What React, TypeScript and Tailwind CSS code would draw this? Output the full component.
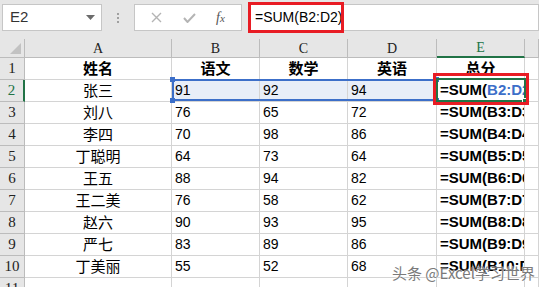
import React from "react";

const rows = [
  { name: "张三", b: 91, c: 92, d: 94 },
  { name: "刘八", b: 76, c: 65, d: 72 },
  { name: "李四", b: 70, c: 98, d: 86 },
  { name: "丁聪明", b: 64, c: 73, d: 64 },
  { name: "王五", b: 88, c: 94, d: 82 },
  { name: "王二美", b: 76, c: 58, d: 62 },
  { name: "赵六", b: 90, c: 93, d: 95 },
  { name: "严七", b: 83, c: 89, d: 86 },
  { name: "丁美丽", b: 55, c: 52, d: 68 },
];

const cjk = "font-['Noto_Sans_CJK_SC',sans-serif]";
const num = "font-['Liberation_Sans',Arial,sans-serif]";
const hdrFont = "font-['Liberation_Serif','Noto_Sans_CJK_SC',serif]";

function Toolbar() {
  return (
    <div className="relative h-[39px] bg-[#e6e6e6] flex items-start pt-[4px]">
      {/* name box */}
      <div className="ml-[2px] w-[100px] h-[27px] bg-white border border-[#c6c6c6] flex items-center justify-between pl-[7px] pr-[6px]">
        <span className={`${num} text-[15px] text-[#333]`}>E2</span>
        <svg width="9" height="5" viewBox="0 0 9 5">
          <path d="M0 0 H9 L4.5 5 Z" fill="#6b6b6b" />
        </svg>
      </div>
      {/* grip dots */}
      <div className="w-[32px] h-[27px] flex flex-col items-center justify-center gap-[2px]">
        <div className="w-[2px] h-[2px] bg-[#a0a0a0]" />
        <div className="w-[2px] h-[2px] bg-[#a0a0a0]" />
        <div className="w-[2px] h-[2px] bg-[#a0a0a0]" />
      </div>
      {/* cancel / enter / fx */}
      <div className="w-[108px] h-[27px] bg-white border border-[#c6c6c6] flex items-center justify-around px-[6px]">
        <svg width="11" height="11" viewBox="0 0 11 11">
          <path d="M1 1 L10 10 M10 1 L1 10" stroke="#b4b4b4" strokeWidth="1.4" />
        </svg>
        <svg width="13" height="10" viewBox="0 0 13 10">
          <path d="M1 5 L4.5 9 L12 1" stroke="#b4b4b4" strokeWidth="2" fill="none" />
        </svg>
        <span className="font-['Liberation_Serif',serif] italic text-[14px] text-[#555] leading-none">
          f<span className="text-[11px]">x</span>
        </span>
      </div>
      {/* formula input */}
      <div className="ml-[6px] flex-1 h-[27px] bg-white border border-[#c6c6c6] flex items-center pl-[6px]">
        <span className={`${num} text-[14px] text-black`}>=SUM(B2:D2)</span>
      </div>
      <div className="absolute left-[248px] top-[2px] w-[96px] h-[31px] border-[3px] border-[#e81c24]" />
    </div>
  );
}

export default function App() {
  const cell = "border-r border-b border-[#d4d4d4] h-[22px] overflow-hidden whitespace-nowrap flex items-center";
  const rh = `${hdrFont} border-r border-b border-[#bcbcbc] bg-[#e6e6e6] h-[22px] flex items-center justify-center text-[15px] text-[#222]`;
  const ch = `${hdrFont} border-r border-b border-[#bcbcbc] bg-[#e6e6e6] h-[19px] flex items-center justify-center text-[14px] text-[#222]`;

  return (
    <div className="w-[539px] h-[287px] overflow-hidden bg-white relative">
      <Toolbar />
      <div className="relative grid grid-cols-[25px_147px_88px_88px_89px_88px_14px]">
        {/* column headers */}
        <div className={`${ch} items-end justify-end pr-[3px] pb-[3px]`}>
          <svg width="11" height="11" viewBox="0 0 11 11">
            <path d="M11 0 V11 H0 Z" fill="#c2c2c2" />
          </svg>
        </div>
        <div className={ch}>A</div>
        <div className={ch}>B</div>
        <div className={ch}>C</div>
        <div className={ch}>D</div>
        <div className={`${ch} bg-[#d2d2d2] text-[#217346] border-b-2 border-b-[#217346]`}>E</div>
        <div className={ch} />

        {/* row 1 */}
        <div className={rh}>1</div>
        <div className={`${cell} ${cjk} justify-center font-bold text-[15px]`}>姓名</div>
        <div className={`${cell} ${cjk} justify-center font-bold text-[15px]`}>语文</div>
        <div className={`${cell} ${cjk} justify-center font-bold text-[15px]`}>数学</div>
        <div className={`${cell} ${cjk} justify-center font-bold text-[15px]`}>英语</div>
        <div className={`${cell} ${cjk} justify-center font-bold text-[15px]`}>总分</div>
        <div className={cell} />

        {rows.map((r, i) => {
          const n = i + 2;
          const active = n === 2;
          return (
            <React.Fragment key={n}>
              <div
                className={
                  active
                    ? `${rh} bg-[#d2d2d2] text-[#217346] border-r-2 border-r-[#217346]`
                    : rh
                }
              >
                {n}
              </div>
              <div className={`${cell} ${cjk} justify-center text-[15px] text-black`}>{r.name}</div>
              <div className={`${cell} ${num} pl-[3px] text-[14px] text-black ${active ? "bg-[#e8eef8]" : ""}`}>{r.b}</div>
              <div className={`${cell} ${num} pl-[3px] text-[14px] text-black ${active ? "bg-[#e8eef8]" : ""}`}>{r.c}</div>
              <div className={`${cell} ${num} pl-[3px] text-[14px] text-black ${active ? "bg-[#e8eef8]" : ""}`}>{r.d}</div>
              <div className={`${cell} ${num} pl-[3px] text-[15px] font-bold text-black`}>
                {active ? (
                  <span>
                    =SUM(<span className="text-[#3c6fc9]">B2:D2</span>)
                  </span>
                ) : (
                  `=SUM(B${n}:D${n})`
                )}
              </div>
              <div className={cell} />
            </React.Fragment>
          );
        })}

        {/* row 11 */}
        <div className={rh}>11</div>
        <div className={cell} />
        <div className={cell} />
        <div className={cell} />
        <div className={cell} />
        <div className={cell} />
        <div className={cell} />

        {/* referenced range B2:D2 */}
        <div className="absolute left-[172px] top-[40px] w-[265px] h-[22px] border-2 border-[#3c6fc9]" />
        <div className="absolute left-[170px] top-[38px] w-[5px] h-[5px] bg-[#3c6fc9]" />
        <div className="absolute left-[170px] top-[59px] w-[5px] h-[5px] bg-[#3c6fc9]" />
        <div className="absolute left-[434px] top-[38px] w-[5px] h-[5px] bg-[#3c6fc9]" />
        <div className="absolute left-[434px] top-[59px] w-[5px] h-[5px] bg-[#3c6fc9]" />

        {/* active cell E2 */}
        <div className="absolute left-[436px] top-[39px] w-[90px] h-[24px] border-2 border-[#217346]" />
        <div className="absolute left-[522px] top-[59px] w-[5px] h-[5px] bg-[#217346] border border-white" />

        {/* annotation */}
        <div className="absolute left-[433px] top-[34px] w-[96px] h-[32px] border-[3px] border-[#e81c24]" />
      </div>

      {/* watermark */}
      <div
        className={`absolute left-[392px] top-[262px] ${cjk} text-[15px] text-[#7a7a7a] whitespace-nowrap [text-shadow:0_0_2px_#fff,0_0_1px_#fff]`}
      >
        头条 @Excel学习世界
      </div>
    </div>
  );
}
